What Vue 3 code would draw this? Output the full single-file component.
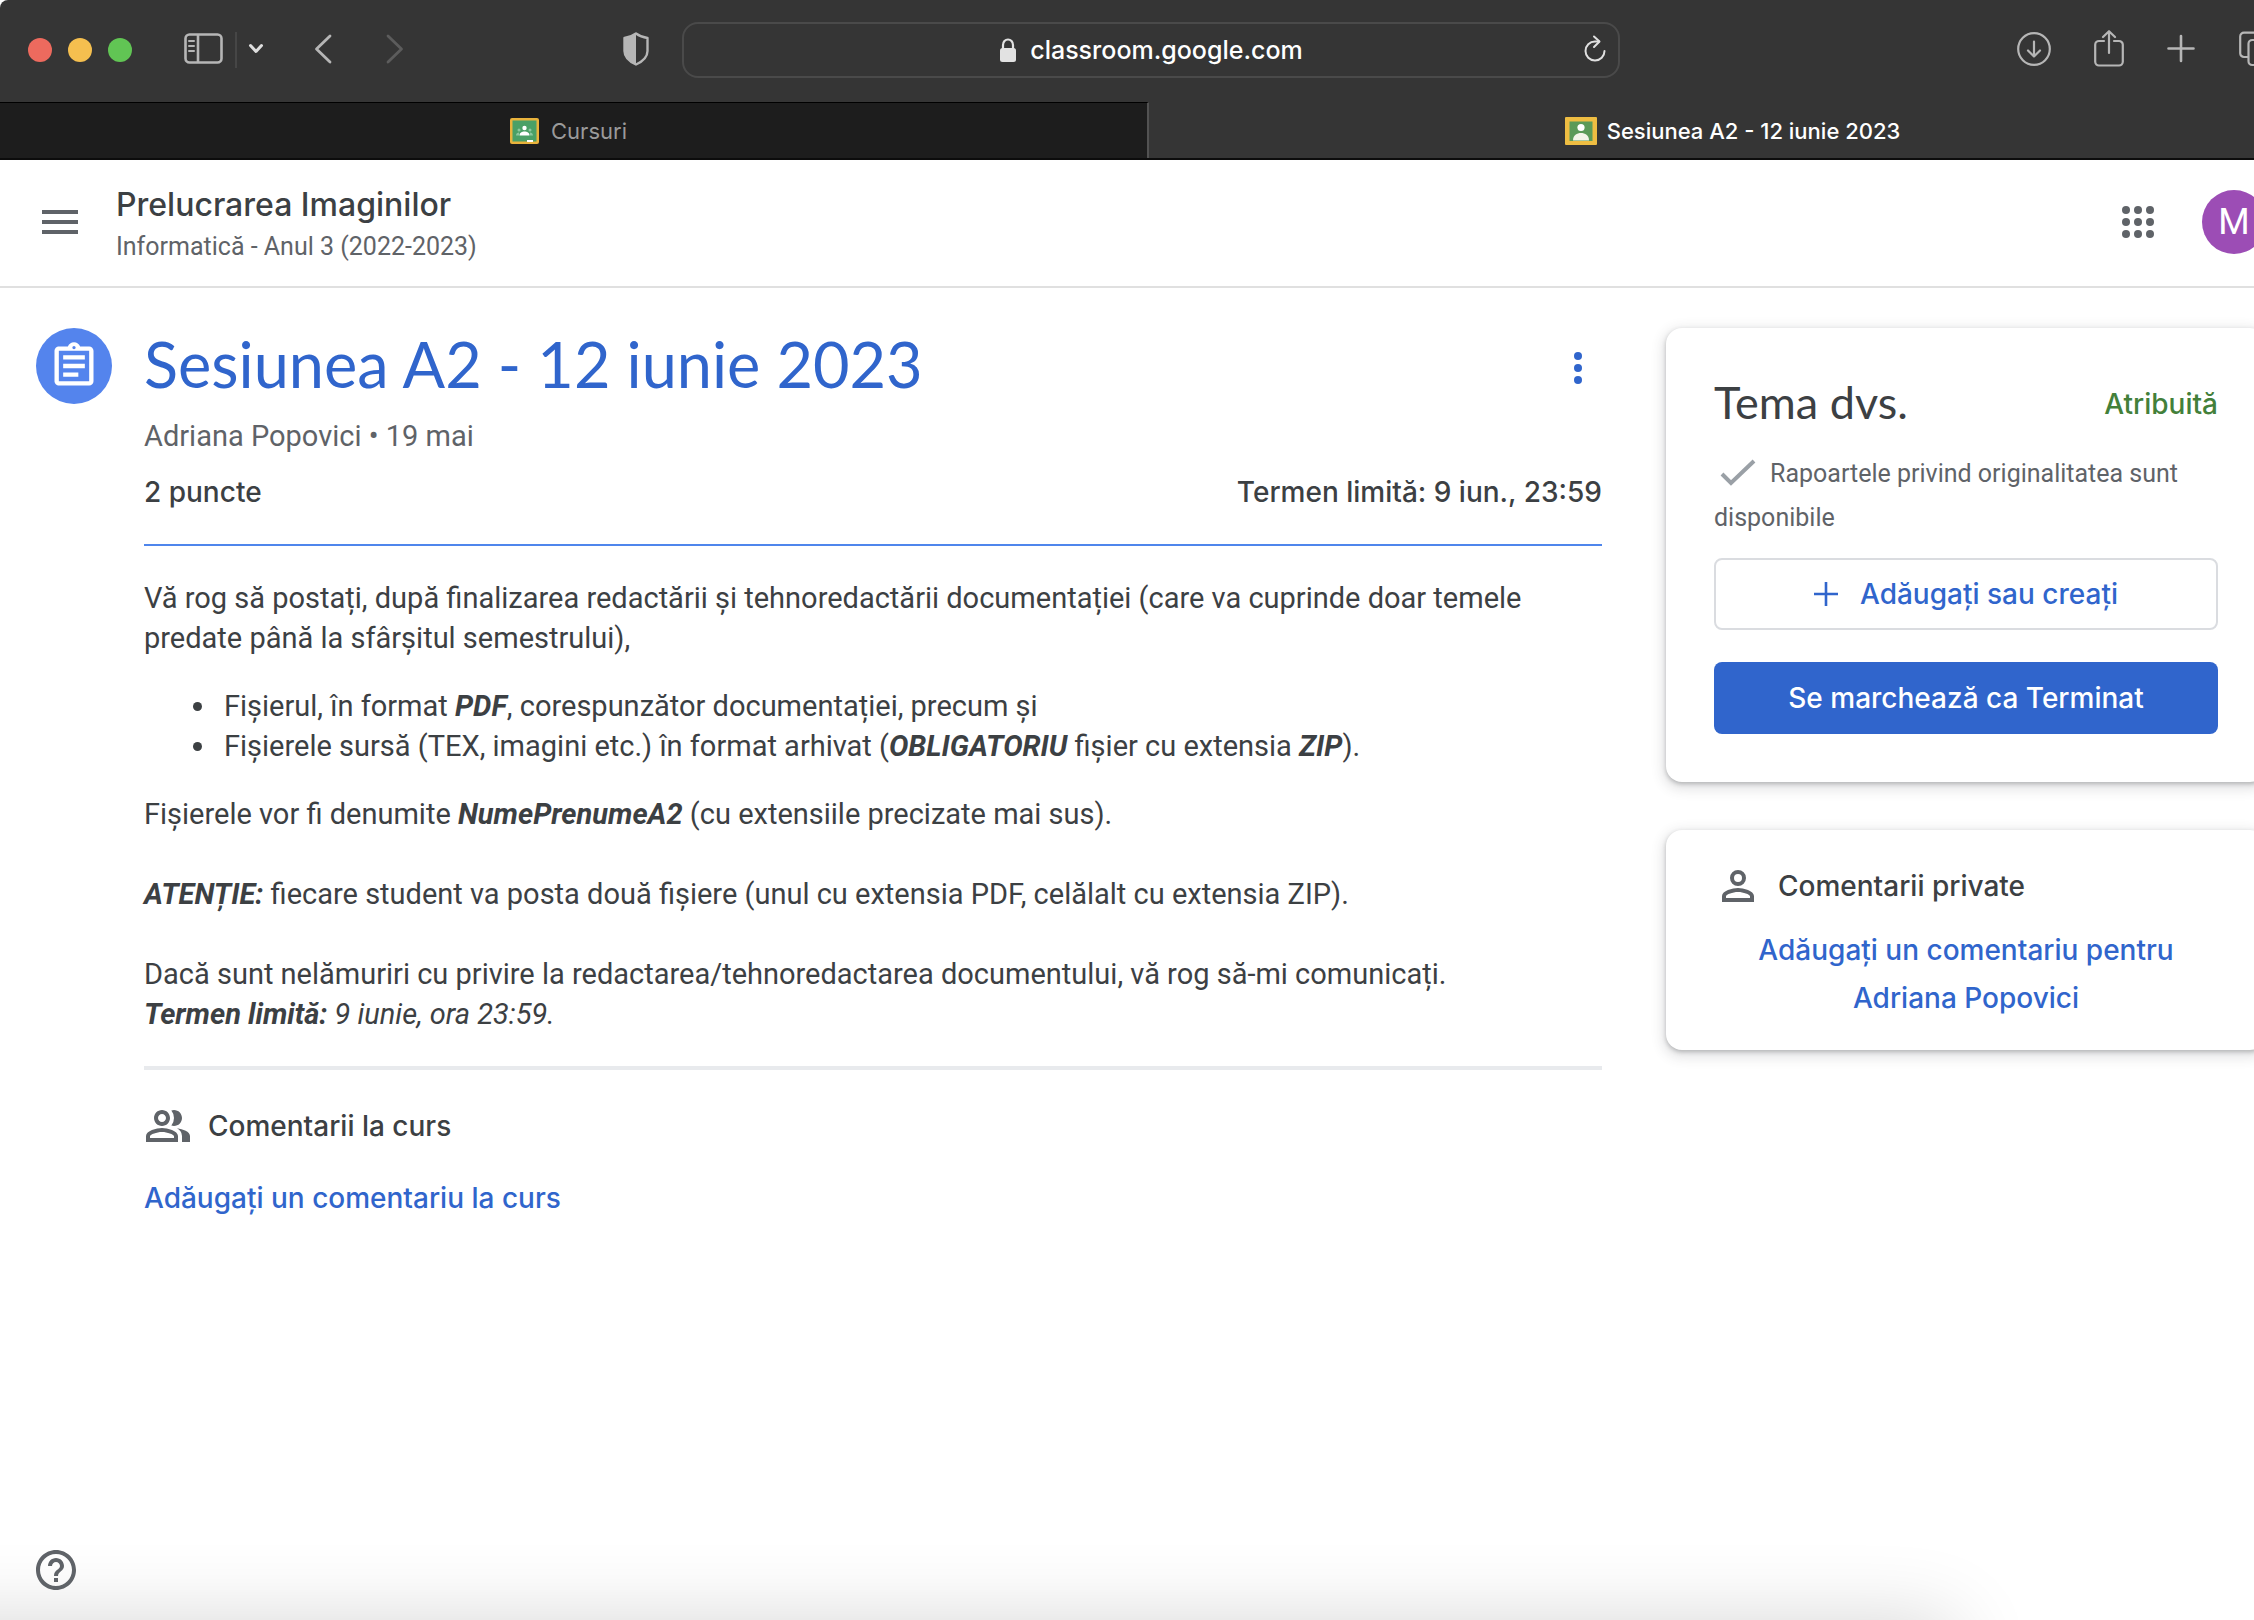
<script setup>
const lights = ['red', 'yellow', 'green']
const dots = [0, 1, 2, 3, 4, 5, 6, 7, 8]
</script>

<template>
  <div class="viewport">
    <div class="window">
      <header class="toolbar">
        <div class="lights">
          <span v-for="c in lights" :key="c" class="light" :class="c"></span>
        </div>
        <div class="side-tools">
          <button class="tool" aria-label="Bară laterală">
            <svg width="40" height="32" viewBox="0 0 40 32" fill="none" stroke="#b6b6b6" stroke-width="2.6">
              <rect x="1.5" y="1.5" width="36" height="28" rx="4" />
              <path d="M14 1.5v28" />
              <path d="M5 8h5M5 13h5M5 18h5" stroke-width="2" stroke-linecap="round" />
            </svg>
          </button>
          <span class="divider"></span>
          <button class="tool" aria-label="Grupuri de file">
            <svg width="16" height="12" viewBox="0 0 16 12" fill="none" stroke="#dedede" stroke-width="3" stroke-linecap="round" stroke-linejoin="round"><path d="M2.500 2.500l5.500 6 5.500-6" /></svg>
          </button>
        </div>
        <nav class="history">
          <button class="tool" aria-label="Înapoi">
            <svg width="18" height="32" viewBox="0 0 18 32" fill="none" stroke="#b6b6b6" stroke-width="2.800" stroke-linecap="round" stroke-linejoin="round"><path d="M16 3L2.500 16 16 29" /></svg>
          </button>
          <button class="tool" aria-label="Înainte">
            <svg width="18" height="32" viewBox="0 0 18 32" fill="none" stroke="#5c5c5c" stroke-width="2.800" stroke-linecap="round" stroke-linejoin="round"><path d="M2 3l13.500 13L2 29" /></svg>
          </button>
        </nav>
        <button class="tool shield" aria-label="Raport de confidențialitate">
          <svg width="28" height="34" viewBox="0 0 28 34">
            <path d="M14 1.500C10 4.500 6 5.500 2.500 6v13c0 6 5 10.500 11.500 13.500C20.500 29.500 25.500 25 25.500 19V6C22 5.500 18 4.500 14 1.500z" fill="none" stroke="#b6b6b6" stroke-width="2.400" stroke-linejoin="round" />
            <path d="M14 1.500C10 4.500 6 5.500 2.500 6v13c0 6 5 10.500 11.500 13.500z" fill="#b6b6b6" />
          </svg>
        </button>
        <div class="address">
          <svg class="lock" width="18" height="24" viewBox="0 0 18 24">
            <rect x="1" y="10" width="16" height="14" rx="2.500" fill="#e2e2e2" />
            <path d="M4 11V7a5 5.500 0 0 1 10 0v4" fill="none" stroke="#e2e2e2" stroke-width="2.200" />
          </svg>
          <span class="host">classroom.google.com</span>
          <button class="tool reload" aria-label="Reîncarcă">
            <svg width="24" height="28" viewBox="0 0 24 28" fill="none" stroke="#e0e0e0" stroke-width="2" stroke-linecap="round" stroke-linejoin="round">
              <path d="M21.500 16a9.500 9.500 0 1 1-9.500-9.500h4" /><path d="M11 1.500l5.500 5-5.500 5.500" />
            </svg>
          </button>
        </div>
        <div class="actions">
          <button class="tool" aria-label="Descărcări">
            <svg width="34" height="38" viewBox="0 0 34 38" fill="none" stroke="#b6b6b6" stroke-width="2.200" stroke-linecap="round" stroke-linejoin="round">
              <circle cx="17" cy="19" r="15.800" /><path d="M17 11.500v15M11 20.500l6 6 6-6" />
            </svg>
          </button>
          <button class="tool" aria-label="Partajare">
            <svg width="30" height="38" viewBox="0 0 30 38" fill="none" stroke="#b6b6b6" stroke-width="2.200" stroke-linecap="round" stroke-linejoin="round">
              <path d="M10 11H5a3.800 3.800 0 0 0-3.800 3.800v17A3.800 3.800 0 0 0 5 35.500h20a3.800 3.800 0 0 0 3.800-3.700v-17A3.800 3.800 0 0 0 25 11h-5" />
              <path d="M15 23V2M9 7L15 1.200l6 5.800" />
            </svg>
          </button>
          <button class="tool" aria-label="Filă nouă">
            <svg width="28" height="38" viewBox="0 0 28 38" fill="none" stroke="#b6b6b6" stroke-width="2.600" stroke-linecap="round"><path d="M14 6v25M1.500 18.500h25" /></svg>
          </button>
          <button class="tool" aria-label="Prezentare file">
            <svg width="36" height="38" viewBox="0 0 36 38" fill="none" stroke="#b6b6b6" stroke-width="2.200">
              <path d="M10 27H6a3.800 3.800 0 0 1-3.800-3.800V6.500A3.800 3.800 0 0 1 6 2.700h16.500a3.800 3.800 0 0 1 3.800 3.800V10" />
              <rect x="10.500" y="10" width="24" height="25" rx="3.800" />
            </svg>
          </button>
        </div>
      </header>

      <nav class="tabs">
        <a class="tab" href="#cursuri">
          <svg width="29" height="26" viewBox="0 0 29 26">
            <rect width="29" height="26" rx="2" fill="#e9b33c" /><rect x="2.500" y="2.500" width="24" height="21" fill="#4aa066" />
            <circle cx="14.500" cy="10" r="2.200" fill="#fff" /><path d="M9.500 17.500c0-3 2.500-4 5-4s5 1 5 4z" fill="#fff" />
            <circle cx="9" cy="12" r="1.500" fill="#8cc79f" /><circle cx="20" cy="12" r="1.500" fill="#8cc79f" />
            <path d="M6 17.500c0-2 1.500-3 3-3v3zM23 17.500c0-2-1.500-3-3-3v3z" fill="#8cc79f" />
            <rect x="17" y="22" width="6" height="2" fill="#fff" />
          </svg>
          <span>Cursuri</span>
        </a>
        <a class="tab active" href="#sesiune">
          <svg width="32" height="28" viewBox="0 0 32 28">
            <rect width="32" height="28" rx="1" fill="#eebd42" /><rect x="4.500" y="4.500" width="23" height="19.500" fill="#5b9a58" />
            <circle cx="16" cy="10.500" r="3.600" fill="#fff" /><path d="M8 23.500c0-5.500 4-7.500 8-7.500s8 2 8 7.500z" fill="#f3f4e8" />
          </svg>
          <span>Sesiunea A2 - 12 iunie 2023</span>
        </a>
      </nav>

      <div class="class-header">
        <button class="plain menu" aria-label="Meniu principal">
          <svg width="36" height="24" viewBox="0 0 36 24" fill="#5f6368"><path d="M0 0h36v4H0zM0 10h36v4H0zM0 20h36v4H0z" /></svg>
        </button>
        <div class="class-name">
          <a class="course" href="#curs">Prelucrarea Imaginilor</a>
          <span class="section">Informatică - Anul 3 (2022-2023)</span>
        </div>
        <button class="plain" aria-label="Aplicații Google">
          <svg width="32" height="32" viewBox="0 0 32 32" fill="#5f6368">
            <circle v-for="i in dots" :key="i" :cx="4 + (i % 3) * 12" :cy="4 + Math.floor(i / 3) * 12" r="4" />
          </svg>
        </button>
        <button class="avatar" aria-label="Cont Google">M</button>
      </div>

      <main class="page">
        <span class="badge">
          <svg width="52" height="52" viewBox="0 0 24 24" fill="#fff"><path d="M7 15h7v2H7zm0-4h10v2H7zm0-4h10v2H7zm12-4h-4.180C14.400 1.840 13.300 1 12 1c-1.300 0-2.400.84-2.820 2H5c-.14 0-.27.01-.4.040-.39.080-.74.280-1.010.55-.18.180-.33.400-.43.640-.1.230-.16.490-.16.770v14c0 .270.060.540.160.780s.25.450.43.640c.27.270.62.470 1.010.55.130.020.260.030.400.030h14c1.100 0 2-.9 2-2V5c0-1.100-.9-2-2-2zm-7-.25c.41 0 .75.340.75.750s-.34.750-.75.750-.75-.34-.75-.75.340-.75.750-.75zM19 19H5V5h14v14z" /></svg>
        </span>

        <article class="assignment">
          <div class="title-row">
            <h1>Sesiunea A2 - 12 iunie 2023</h1>
            <button class="plain more" aria-label="Mai multe opțiuni">
              <svg width="8" height="32" viewBox="0 0 8 32" fill="#3065cc"><circle cx="4" cy="4" r="4" /><circle cx="4" cy="16" r="4" /><circle cx="4" cy="28" r="4" /></svg>
            </button>
          </div>
          <div class="meta">Adriana Popovici • 19 mai</div>
          <div class="facts"><span>2 puncte</span><span>Termen limită: 9 iun., 23:59</span></div>

          <div class="body">
            <p>Vă rog să postați, după finalizarea redactării și tehnoredactării documentației (care va cuprinde doar temele predate până la sfârșitul semestrului),</p>
            <ul>
              <li>Fișierul, în format <b><i>PDF</i></b>, corespunzător documentației, precum și</li>
              <li>Fișierele sursă (TEX, imagini etc.) în format arhivat (<b><i>OBLIGATORIU</i></b> fișier cu extensia <b><i>ZIP</i></b>).</li>
            </ul>
            <p>
              Fișierele vor fi denumite <b><i>NumePrenumeA2</i></b> (cu extensiile precizate mai sus).<br /><br />
              <b><i>ATENȚIE:</i></b> fiecare student va posta două fișiere (unul cu extensia PDF, celălalt cu extensia ZIP).<br /><br />
              Dacă sunt nelămuriri cu privire la redactarea/tehnoredactarea documentului, vă rog să-mi comunicați.<br />
              <i><b>Termen limită:</b> 9 iunie, ora 23:59.</i>
            </p>
          </div>

          <section class="comments">
            <h2>
              <svg width="48" height="48" viewBox="0 0 24 24" fill="#5f6368"><path d="M16.500 13.130A4.500 4.500 0 0 1 19 17v3h4v-3c0-2.180-3.570-3.470-6.500-3.870z" /><path d="M15 12c2.210 0 4-1.790 4-4s-1.790-4-4-4c-.47 0-.91.100-1.330.240a5.980 5.980 0 0 1 0 7.520c.42.140.86.240 1.330.240z" /><path d="M9 12c2.210 0 4-1.790 4-4s-1.790-4-4-4-4 1.790-4 4 1.790 4 4 4zm0-6c1.100 0 2 .9 2 2s-.9 2-2 2-2-.9-2-2 .9-2 2-2zM9 13c-2.670 0-8 1.340-8 4v3h16v-3c0-2.660-5.330-4-8-4zm6 5H3v-.99C3.200 16.290 6.300 15 9 15s5.800 1.290 6 2v1z" /></svg>
              Comentarii la curs
            </h2>
            <button class="plain link">Adăugați un comentariu la curs</button>
          </section>
        </article>

        <aside class="rail">
          <section class="card work">
            <div class="work-head"><h2>Tema dvs.</h2><span class="status">Atribuită</span></div>
            <p class="reports">
              <svg class="check" width="56" height="28" viewBox="0 0 56 28"><path d="M8 16l9 9L40 3" fill="none" stroke="#9aa0a6" stroke-width="4" /></svg>Rapoartele privind originalitatea sunt disponibile
            </p>
            <button class="btn outlined">
              <svg width="24" height="24" viewBox="0 0 24 24" fill="#3065cc"><path d="M10.700 0h2.600v10.700H24v2.600H13.300V24h-2.600V13.300H0v-2.600h10.700z" /></svg>
              Adăugați sau creați
            </button>
            <button class="btn filled">Se marchează ca Terminat</button>
          </section>
          <section class="card private">
            <h3>
              <svg width="48" height="48" viewBox="0 0 24 24" fill="#5f6368"><path d="M12 4a4 4 0 1 0 0 8 4 4 0 0 0 0-8zm0 6a2 2 0 1 1 0-4 2 2 0 0 1 0 4zM12 13c-2.670 0-8 1.340-8 4v3h16v-3c0-2.660-5.330-4-8-4zm6 5H6v-.99c.2-.72 3.300-2.010 6-2.010s5.800 1.290 6 2v1z" /></svg>
              Comentarii private
            </h3>
            <button class="plain link">Adăugați un comentariu pentru Adriana Popovici</button>
          </section>
        </aside>
      </main>
    </div>
    <div class="status-shade"></div>
    <button class="plain help" aria-label="Ajutor">
      <svg width="40" height="40" viewBox="2 2 20 20" fill="#5f6368"><path d="M11 18h2v-2h-2v2zm1-16C6.480 2 2 6.480 2 12s4.480 10 10 10 10-4.480 10-10S17.520 2 12 2zm0 18c-4.410 0-8-3.590-8-8s3.590-8 8-8 8 3.590 8 8-3.590 8-8 8zm0-14c-2.210 0-4 1.790-4 4h2c0-1.100.9-2 2-2s2 .9 2 2c0 2-3 1.750-3 5h2c0-2.250 3-2.500 3-5 0-2.210-1.790-4-4-4z" /></svg>
    </button>
  </div>
</template>

<style>
html,
body {
  background: #fff;
}
</style>

<style scoped>
.viewport {
  --display: Lato, "Open Sans", sans-serif;
  --label: Inter, "Open Sans", sans-serif;
  --body: Roboto, "Noto Sans", sans-serif;
  position: relative;
  min-height: 100vh;
  overflow: hidden;
  font-family: var(--body);
  font-size: 29px;
  line-height: 40px;
  color: #3c4043;
}
.viewport * {
  box-sizing: border-box;
}
/* The window runs a little past the right edge of the screen. */
.window {
  width: calc(100% + 62px);
}
button {
  font: inherit;
  cursor: pointer;
}
.tool,
.plain {
  display: flex;
  padding: 0;
  border: 0;
  background: none;
}
.tool {
  padding-bottom: 2px;
}
svg {
  display: block;
  flex: none;
}
h1,
h2,
h3,
p,
ul {
  margin: 0;
  font-weight: 400;
}

.toolbar {
  display: flex;
  align-items: center;
  height: 102px;
  padding: 0 42px 2px 28px;
  background: #353535;
  border-top-left-radius: 8px;
}
.lights {
  display: flex;
  gap: 16px;
}
.light {
  width: 24px;
  height: 24px;
  border-radius: 50%;
}
.red { background: #ed6a5e; }
.yellow { background: #f5bf4f; }
.green { background: #61c554; }
.side-tools {
  display: flex;
  align-items: center;
  gap: 11px;
  margin-left: 52px;
}
.divider {
  width: 2px;
  height: 36px;
  background: #464646;
}
.history {
  display: flex;
  gap: 54px;
  margin-left: 50px;
}
.shield {
  margin-left: 218px;
}
.address {
  position: relative;
  display: flex;
  align-items: center;
  justify-content: center;
  gap: 13px;
  flex: 1;
  height: 56px;
  margin-left: 32px;
  border: 2px solid #4a4a4a;
  border-radius: 16px;
  font-family: var(--label);
  font-size: 25px;
  font-weight: 500;
  color: #fff;
}
.reload {
  position: absolute;
  right: 11px;
}
.actions {
  display: flex;
  align-items: center;
  gap: 43px;
  margin-left: 397px;
}

.tabs {
  display: flex;
  height: 58px;
  padding-right: 18px;
  background: #353535;
  border-bottom: 2px solid #0c0c0c;
}
.tab {
  display: flex;
  align-items: center;
  justify-content: center;
  gap: 12px;
  width: 50%;
  padding-right: 10px;
  background: #1d1d1d;
  border-top: 1px solid #000;
  border-right: 2px solid #525252;
  font-family: var(--label);
  font-size: 22px;
  color: #9a9a9a;
  text-decoration: none;
}
.tab.active {
  gap: 10px;
  padding: 0 0 0 20px;
  background: #353535;
  border-color: #353535;
  font-weight: 500;
  color: #fff;
}

.class-header {
  display: flex;
  align-items: center;
  height: 128px;
  padding: 0 50px 2px 42px;
  border-bottom: 2px solid #e0e0e0;
}
.class-name {
  display: flex;
  flex-direction: column;
  gap: 2px;
  flex: 1;
  margin-left: 38px;
  padding-top: 8px;
}
.course {
  font-family: var(--label);
  font-size: 32px;
  font-weight: 500;
  color: #3c4043;
  text-decoration: none;
}
.section {
  font-size: 25px;
  color: #5f6368;
}
.avatar {
  width: 64px;
  height: 64px;
  margin-left: 48px;
  padding: 0;
  border: 0;
  border-radius: 50%;
  background: #9c4db5;
  font-size: 36px;
  color: #fff;
}

.page {
  display: flex;
  align-items: flex-start;
  padding: 40px 50px 40px 36px;
}
.badge {
  display: flex;
  align-items: center;
  justify-content: center;
  width: 76px;
  height: 76px;
  border-radius: 50%;
  background: #5484ed;
}
.assignment {
  flex: 1;
  margin: 0 64px 0 32px;
}
.title-row {
  display: flex;
  align-items: center;
  justify-content: space-between;
  padding-right: 20px;
}
.more {
  padding-top: 8px;
}
h1 {
  font-family: var(--display);
  font-size: 63px;
  line-height: 72px;
  color: #3065cc;
}
.meta {
  margin-top: 16px;
  color: #5f6368;
}
.facts {
  display: flex;
  justify-content: space-between;
  margin-top: 16px;
  padding-bottom: 32px;
  border-bottom: 2px solid #4f86ec;
  font-family: var(--label);
  font-size: 28px;
  font-weight: 500;
}
.body {
  padding: 32px 0;
  border-bottom: 4px solid #e8eaed;
}
ul {
  margin: 28px 0;
  padding-left: 74px;
}
li {
  padding-left: 6px;
}
.comments h2,
.private h3 {
  display: flex;
  align-items: center;
  font-family: var(--label);
  font-size: 28px;
  font-weight: 500;
}
.comments h2 {
  gap: 16px;
  margin-top: 32px;
}
.link {
  font-family: var(--label);
  font-size: 28px;
  font-weight: 500;
  color: #3065cc;
}
.comments .link {
  margin-top: 28px;
}

.rail {
  display: flex;
  flex-direction: column;
  gap: 48px;
  width: 600px;
}
.card {
  border-radius: 16px;
  background: #fff;
  box-shadow: 0 2px 4px rgba(60, 64, 67, 0.3), 0 4px 12px 4px rgba(60, 64, 67, 0.13);
}
.work {
  padding: 48px;
}
.work-head {
  display: flex;
  align-items: center;
  justify-content: space-between;
}
.work h2 {
  padding-bottom: 4px;
  font-family: var(--display);
  font-size: 45px;
  line-height: 52px;
}
.status {
  font-family: var(--label);
  font-size: 28px;
  font-weight: 500;
  color: #43803a;
}
.reports {
  margin: 20px 0 18px;
  font-size: 25px;
  line-height: 44px;
  color: #5f6368;
}
.check {
  display: inline-block;
  vertical-align: -4px;
}
.btn {
  display: flex;
  align-items: center;
  justify-content: center;
  gap: 22px;
  width: 100%;
  height: 72px;
  border-radius: 8px;
  font-family: var(--label);
  font-size: 28px;
  font-weight: 500;
}
.outlined {
  border: 2px solid #dadce0;
  background: #fff;
  color: #3065cc;
}
.filled {
  margin-top: 32px;
  border: 0;
  background: #3065cc;
  color: #fff;
}
.private {
  padding: 32px 48px 28px;
}
.private h3 {
  gap: 16px;
}
.private .link {
  justify-content: center;
  width: 100%;
  margin-top: 16px;
  padding: 0 32px;
  line-height: 48px;
  text-align: center;
}

.status-shade {
  position: absolute;
  top: 100%;
  left: -100px;
  right: 300px;
  height: 100px;
  box-shadow: 0 0 80px rgba(0, 0, 0, 0.16);
}
.help {
  position: absolute;
  left: 36px;
  bottom: 30px;
}
</style>
